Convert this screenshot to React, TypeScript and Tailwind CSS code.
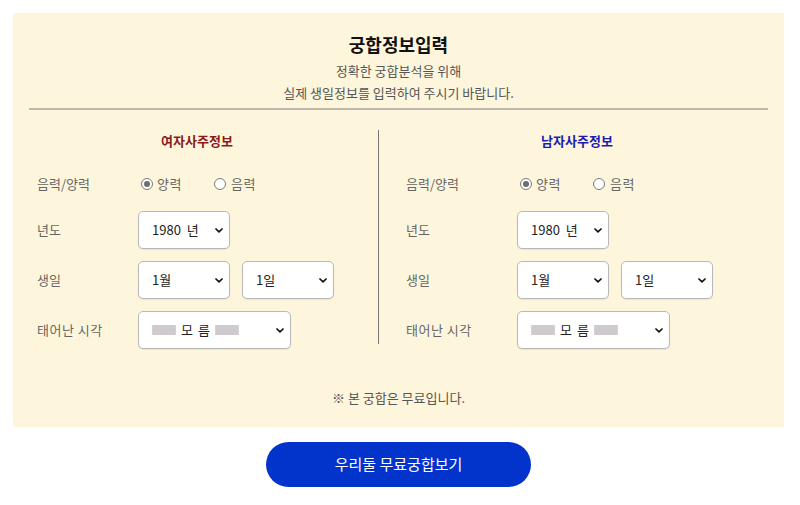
import React from "react";

const Chevron = () => (
  <svg width="8" height="5" viewBox="0 0 8 5" className="shrink-0">
    <path d="M1 1l3 2.8L7 1" fill="none" stroke="#111" strokeWidth="1.7" strokeLinecap="round" strokeLinejoin="round" />
  </svg>
);

const Select = ({ w, children }: { w: string; children: React.ReactNode }) => (
  <div className={`${w} h-[38px] bg-white border border-[#b8b8b8] rounded-[5px] flex items-center justify-between pl-[13px] pr-[6px] text-[13px] text-[#222] shadow-[0_1px_1px_rgba(0,0,0,0.08)]`}>
    <div className="flex items-center">{children}</div>
    <Chevron />
  </div>
);

const Block = () => (
  <span className="inline-block w-[24px] h-[10px] bg-[#cfcacd] border-x border-[#d9cfd6]" />
);

const Radio = ({ checked }: { checked?: boolean }) => (
  <span className="w-[12px] h-[12px] rounded-full border border-[#7a7a7a] bg-white flex items-center justify-center">
    {checked && <span className="w-[6px] h-[6px] rounded-full bg-[#6e6e6e]" />}
  </span>
);

const Column = ({
  title,
  titleColor,
  labelPad,
  labelW,
}: {
  title: string;
  titleColor: string;
  labelPad: string;
  labelW: string;
}) => (
  <div className="flex flex-col">
    <div className={`pt-[22px] text-center text-[13px] leading-[18px] font-bold ${titleColor}`}>{title}</div>
    <div className={`flex items-center mt-[24px] h-[20px] ${labelPad}`}>
      <div className={`${labelW} text-[13px] text-[#666]`}>음력/양력</div>
      <div className="flex items-center pl-[3px] text-[13px] text-[#666]">
        <Radio checked />
        <span className="ml-[4px] w-[57px] tracking-[0.5px]">양력</span>
        <Radio />
        <span className="ml-[5px] tracking-[0.5px]">음력</span>
      </div>
    </div>
    <div className={`flex items-center mt-[17px] ${labelPad}`}>
      <div className={`${labelW} text-[13px] text-[#666]`}>년도</div>
      <Select w="w-[92px]">1980&nbsp;&nbsp;년</Select>
    </div>
    <div className={`flex items-center mt-[12px] ${labelPad}`}>
      <div className={`${labelW} text-[13px] text-[#666]`}>생일</div>
      <Select w="w-[92px]">1월</Select>
      <div className="w-[12px]" />
      <Select w="w-[92px]">1일</Select>
    </div>
    <div className={`flex items-center mt-[12px] ${labelPad}`}>
      <div className={`${labelW} text-[13px] text-[#666] tracking-[0.5px]`}>태어난 시각</div>
      <Select w="w-[153px]">
        <Block />
        <span className="ml-[5px]">모</span>
        <span className="ml-[5px]">름</span>
        <span className="ml-[5px] flex"><Block /></span>
      </Select>
    </div>
  </div>
);

export default function App() {
  return (
    <div className="w-[800px] h-[505px] bg-white font-['Noto_Sans_CJK_KR','Noto_Sans',sans-serif]">
      <div className="pt-[13px] ml-[13px] w-[771px]">
        <div className="bg-[#fef6dc] px-[16px] pt-[18px] pb-[19px]">
          <div className="text-center text-[18px] leading-[26px] font-bold text-[#111]">궁합정보입력</div>
          <div className="mt-[3px] text-center text-[13px] leading-[22px] text-[#555]">정확한 궁합분석을 위해</div>
          <div className="text-center text-[13px] leading-[22px] text-[#555]">실제 생일정보를 입력하여 주시기 바랍니다.</div>
          <div className="mt-[4px] h-[2px] bg-[#bdb9ad]" />
          <div className="flex">
            <div className="w-[349px] pr-[13px] flex flex-col">
              <Column title="여자사주정보" titleColor="text-[#8b1a1a]" labelPad="pl-[8px]" labelW="w-[101px]" />
            </div>
            <div className="w-px h-[214px] mt-[20px] bg-[#777]" />
            <div className="flex-1 pl-[7px] flex flex-col">
              <Column title="남자사주정보" titleColor="text-[#1c1cb0]" labelPad="pl-[20px]" labelW="w-[111px]" />
            </div>
          </div>
          <div className="mt-[39px] text-center text-[13px] leading-[20px] text-[#555]">※ 본 궁합은 무료입니다.</div>
        </div>
        <div className="flex justify-center mt-[15px]">
          <div className="w-[265px] h-[45px] rounded-full bg-[#0234cc] flex items-center justify-center text-white text-[15px]">
            우리둘 무료궁합보기
          </div>
        </div>
      </div>
    </div>
  );
}
